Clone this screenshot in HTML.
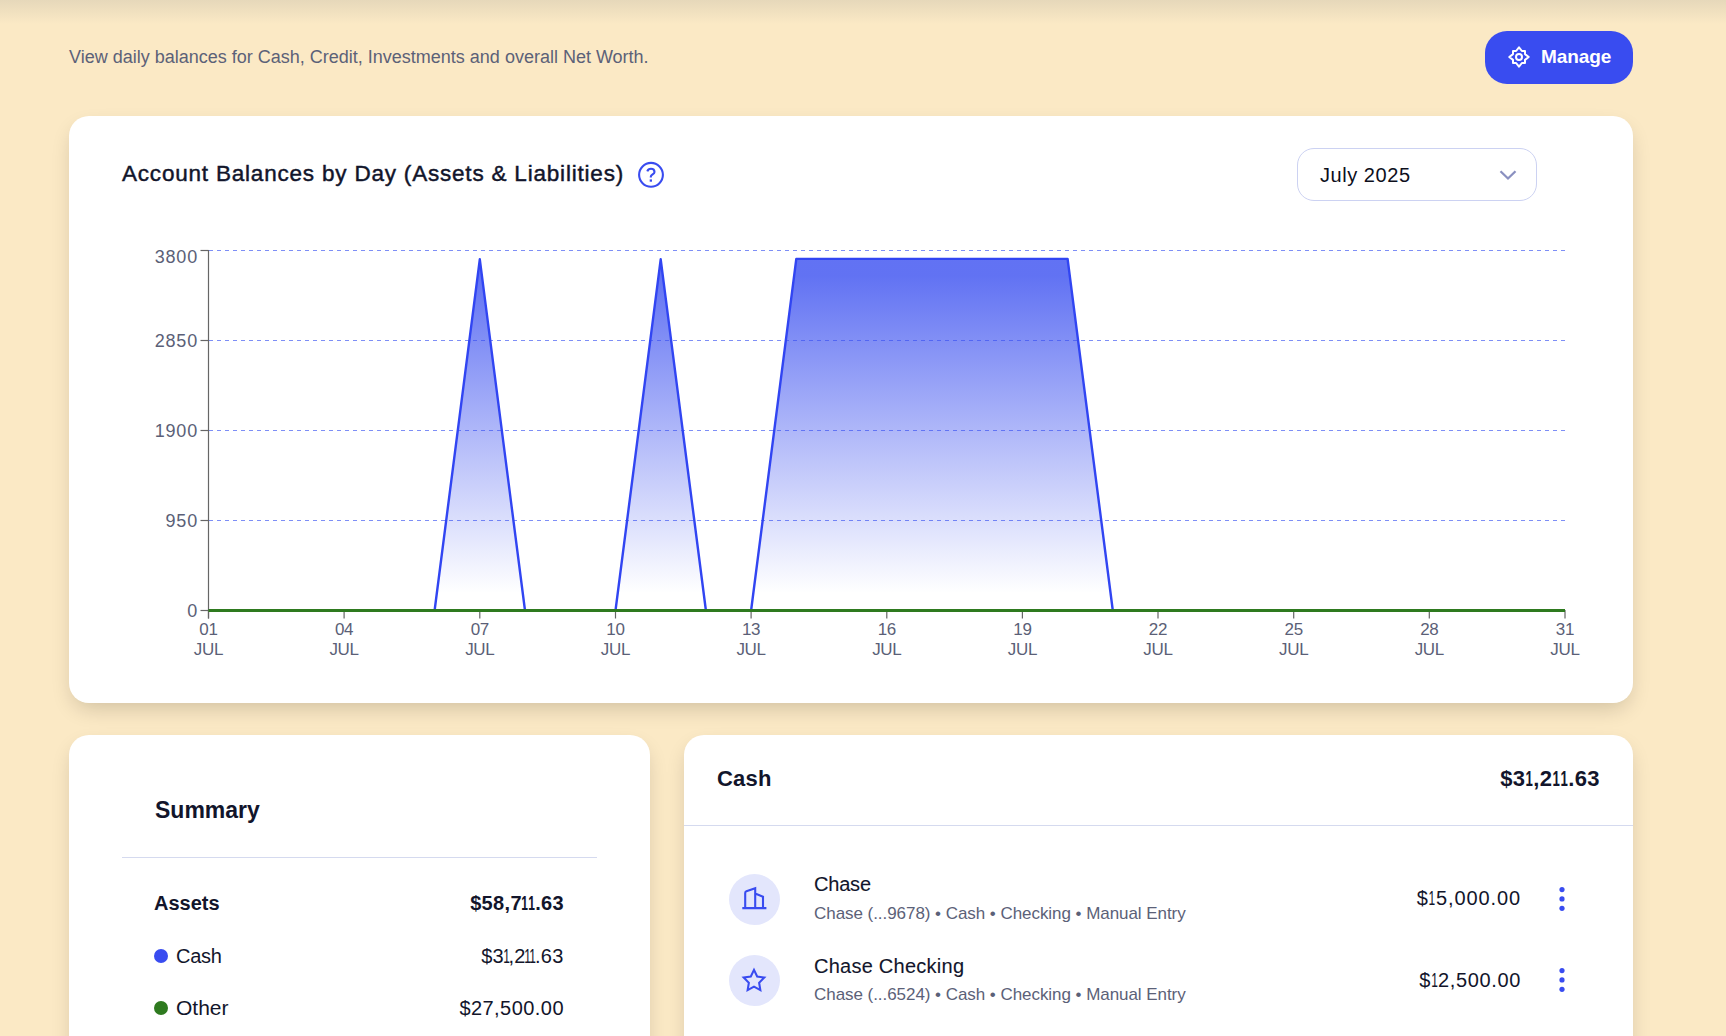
<!DOCTYPE html>
<html><head><meta charset="utf-8">
<style>
*{margin:0;padding:0;box-sizing:border-box}
html,body{width:1726px;height:1036px;overflow:hidden}
body{background:#fbe9c5;font-family:"Liberation Sans",sans-serif;position:relative;color:#12152b}
.a{position:absolute}
.t{position:absolute;white-space:nowrap;line-height:1}
.topshade{position:absolute;left:0;top:0;width:1726px;height:24px;background:linear-gradient(#e6d8ba,#fbe9c5)}
.btn{position:absolute;left:1485px;top:31px;width:148px;height:53px;border-radius:22px;background:#394cf0}
.card{position:absolute;background:#fff;border-radius:20px;box-shadow:0 9px 22px -5px rgba(20,15,0,0.2)}
.dd{position:absolute;left:1297px;top:148px;width:240px;height:53px;border:1px solid #ccd2f2;border-radius:17px;background:#fff}
.xl{position:absolute;font-size:17px;color:#5b5f77;text-align:center;width:60px;line-height:20px;letter-spacing:-0.3px}
.n1{margin:0 -2.4px 0 -2.4px}
.dot{position:absolute;width:14px;height:14px;border-radius:50%}
.ic{position:absolute;width:51px;height:51px;border-radius:50%;background:#e3e6fc}
</style></head><body>
<div class="topshade"></div>
<div class="t" style="left:69px;top:47.6px;font-size:18px;color:#5b6178;">View daily balances for Cash, Credit, Investments and overall Net Worth.</div>
<div class="btn"></div>
<svg class="a" style="left:1503px;top:41px" width="32" height="32" viewBox="-16 -16 32 32"><path d="M-6 -6H-2.9L0 -9.7L2.9 -6H6V-2.9L9.7 0L6 2.9V6H2.9L0 9.7L-2.9 6H-6V2.9L-9.7 0L-6 -2.9Z" fill="none" stroke="#fff" stroke-width="2" stroke-linejoin="round"/><circle cx="0" cy="0" r="3" fill="none" stroke="#fff" stroke-width="2"/></svg>
<div class="t" style="left:1541px;top:46.9px;font-size:19px;font-weight:bold;color:#fff;letter-spacing:-0.1px;">Manage</div>
<div class="card" style="left:69px;top:116px;width:1564px;height:587px"></div>
<div class="t" style="left:122px;top:163.0px;font-size:22.5px;color:#12152b;letter-spacing:0.8px;-webkit-text-stroke:0.45px #12152b;">Account Balances by Day (Assets &amp; Liabilities)</div>
<svg class="a" style="left:634px;top:158px" width="34" height="34" viewBox="0 0 34 34"><circle cx="17" cy="16.8" r="11.9" fill="none" stroke="#394cf0" stroke-width="2.1"/><path d="M13.3 13.3C13.9 11.5 15.3 10.7 17 10.7C19 10.7 20.5 12 20.5 13.9C20.5 16.3 16.8 16.5 16.8 18.8V19.4" fill="none" stroke="#394cf0" stroke-width="2.1"/><rect x="15.7" y="21.4" width="2.3" height="2.3" fill="#394cf0"/></svg>
<div class="dd"></div>
<div class="t" style="left:1320px;top:164.8px;font-size:20px;color:#0d0f1c;letter-spacing:0.55px;">July 2025</div>
<svg class="a" style="left:1496px;top:166px" width="24" height="18" viewBox="0 0 24 18"><path d="M4.5 5.2L12 12.5L19.5 5.2" fill="none" stroke="#8a90c0" stroke-width="2.3"/></svg>
<svg class="a" style="left:0;top:0" width="1726" height="703" viewBox="0 0 1726 703">
<defs><linearGradient id="g" gradientUnits="userSpaceOnUse" x1="0" y1="258" x2="0" y2="610.5"><stop offset="0.05" stop-color="#3a4ff0" stop-opacity="0.8"/><stop offset="0.95" stop-color="#3a4ff0" stop-opacity="0"/></linearGradient></defs>
<g stroke="#7d8ef6" stroke-width="1" stroke-dasharray="4 4">
<line x1="209" y1="250.5" x2="1565" y2="250.5"/><line x1="209" y1="340.5" x2="1565" y2="340.5"/><line x1="209" y1="430.5" x2="1565" y2="430.5"/><line x1="209" y1="520.5" x2="1565" y2="520.5"/>
</g>
<path d="M434.6 610.5L479.8 259.3L525.0 610.5Z M615.5 610.5L660.7 259.3L705.9 610.5Z M751.1 610.5L796.3 258.9L1067.6 258.9L1112.8 610.5Z" fill="url(#g)"/>
<path d="M434.6 610.5L479.8 259.3L525.0 610.5 M615.5 610.5L660.7 259.3L705.9 610.5 M751.1 610.5L796.3 258.9L1067.6 258.9L1112.8 610.5" fill="none" stroke="#3145f2" stroke-width="2.4" stroke-linejoin="round"/>
<g stroke="#666" stroke-width="1.2" fill="none">
<line x1="208.5" y1="250" x2="208.5" y2="618.5"/>
<line x1="200.5" y1="250.5" x2="208.5" y2="250.5"/><line x1="200.5" y1="340.5" x2="208.5" y2="340.5"/><line x1="200.5" y1="430.5" x2="208.5" y2="430.5"/><line x1="200.5" y1="520.5" x2="208.5" y2="520.5"/><line x1="200.5" y1="610.5" x2="208.5" y2="610.5"/>
<line x1="208.5" y1="610" x2="208.5" y2="618.5"/><line x1="344.1" y1="610" x2="344.1" y2="618.5"/><line x1="479.8" y1="610" x2="479.8" y2="618.5"/><line x1="615.5" y1="610" x2="615.5" y2="618.5"/><line x1="751.1" y1="610" x2="751.1" y2="618.5"/><line x1="886.8" y1="610" x2="886.8" y2="618.5"/><line x1="1022.4" y1="610" x2="1022.4" y2="618.5"/><line x1="1158.0" y1="610" x2="1158.0" y2="618.5"/><line x1="1293.7" y1="610" x2="1293.7" y2="618.5"/><line x1="1429.3" y1="610" x2="1429.3" y2="618.5"/><line x1="1565.0" y1="610" x2="1565.0" y2="618.5"/>
</g>
<line x1="208.5" y1="610.5" x2="1565" y2="610.5" stroke="#2e7a1f" stroke-width="3"/>
</svg>
<div class="t" style="right:1528px;top:248.0px;font-size:18px;color:#5b5f77;letter-spacing:0.8px;">3800</div>
<div class="t" style="right:1528px;top:331.7px;font-size:18px;color:#5b5f77;letter-spacing:0.8px;">2850</div>
<div class="t" style="right:1528px;top:421.7px;font-size:18px;color:#5b5f77;letter-spacing:0.8px;">1900</div>
<div class="t" style="right:1528px;top:511.7px;font-size:18px;color:#5b5f77;letter-spacing:0.8px;">950</div>
<div class="t" style="right:1528px;top:601.7px;font-size:18px;color:#5b5f77;letter-spacing:0.8px;">0</div>
<div class="xl" style="left:178.5px;top:619.9px">01<br>JUL</div>
<div class="xl" style="left:314.1px;top:619.9px">04<br>JUL</div>
<div class="xl" style="left:449.8px;top:619.9px">07<br>JUL</div>
<div class="xl" style="left:585.5px;top:619.9px">10<br>JUL</div>
<div class="xl" style="left:721.1px;top:619.9px">13<br>JUL</div>
<div class="xl" style="left:856.8px;top:619.9px">16<br>JUL</div>
<div class="xl" style="left:992.4px;top:619.9px">19<br>JUL</div>
<div class="xl" style="left:1128.0px;top:619.9px">22<br>JUL</div>
<div class="xl" style="left:1263.7px;top:619.9px">25<br>JUL</div>
<div class="xl" style="left:1399.3px;top:619.9px">28<br>JUL</div>
<div class="xl" style="left:1535.0px;top:619.9px">31<br>JUL</div>
<div class="card" style="left:69px;top:735px;width:581px;height:400px"></div>
<div class="t" style="left:155px;top:799.3px;font-size:23px;font-weight:bold;color:#12152b;">Summary</div>
<div class="a" style="left:122px;top:857px;width:475px;height:1px;background:#d5daef"></div>
<div class="t" style="left:154px;top:893.1px;font-size:20px;font-weight:bold;color:#12152b;">Assets</div>
<div class="t" style="right:1162px;top:893.1px;font-size:20px;font-weight:bold;color:#12152b;letter-spacing:0.33px;">$58,7<span style="display:inline-block;transform:scaleX(0.6);margin:0 -2.40px">1</span><span style="display:inline-block;transform:scaleX(0.6);margin:0 -2.40px">1</span>.63</div>
<div class="dot" style="left:154px;top:949px;background:#394cf0"></div>
<div class="t" style="left:176px;top:946.1px;font-size:20px;color:#12152b;letter-spacing:-0.3px;">Cash</div>
<div class="t" style="right:1162.5px;top:945.8px;font-size:20px;color:#12152b;letter-spacing:0.2px;">$3<span style="display:inline-block;transform:scaleX(0.6);margin:0 -3.30px">1</span>,2<span style="display:inline-block;transform:scaleX(0.6);margin:0 -3.30px">1</span><span style="display:inline-block;transform:scaleX(0.6);margin:0 -3.30px">1</span>.63</div>
<div class="dot" style="left:154px;top:1001px;background:#2e7a1f"></div>
<div class="t" style="left:176px;top:996.9px;font-size:21px;color:#12152b;">Other</div>
<div class="t" style="right:1162px;top:997.8px;font-size:20px;color:#12152b;letter-spacing:0.45px;">$27,500.00</div>
<div class="card" style="left:684px;top:735px;width:949px;height:400px"></div>
<div class="t" style="left:717px;top:768.3px;font-size:22px;font-weight:bold;color:#12152b;letter-spacing:0.2px;">Cash</div>
<div class="t" style="right:126px;top:768.2px;font-size:22px;font-weight:bold;color:#12152b;letter-spacing:0.4px;">$3<span style="display:inline-block;transform:scaleX(0.6);margin:0 -2.40px">1</span>,2<span style="display:inline-block;transform:scaleX(0.6);margin:0 -2.40px">1</span><span style="display:inline-block;transform:scaleX(0.6);margin:0 -2.40px">1</span>.63</div>
<div class="a" style="left:684px;top:825px;width:949px;height:1px;background:#d5daef"></div>
<div class="ic" style="left:729px;top:874px"></div>
<svg class="a" style="left:726px;top:870px" width="56" height="56" viewBox="0 0 56 56"><path d="M16.3 38.1H40.4 M19.2 38.1V23Q19.2 21.6 20.4 21.2L29.2 18.3V38.1 M29.2 23.6L37 26.7V38.1" fill="none" stroke="#394cf0" stroke-width="2.1"/></svg>
<div class="t" style="left:814px;top:874.1px;font-size:20px;color:#12152b;letter-spacing:-0.2px;-webkit-text-stroke:0.1px #12152b;">Chase</div>
<div class="t" style="left:814px;top:904.5px;font-size:17px;color:#5b6178;letter-spacing:-0.05px;">Chase (...9678) • Cash • Checking • Manual Entry</div>
<div class="t" style="right:205px;top:887.7px;font-size:20px;color:#12152b;letter-spacing:0.9px;">$<span style="display:inline-block;transform:scaleX(0.6);margin:0 -2.40px">1</span>5,000.00</div>
<svg class="a" style="left:1554px;top:880px" width="16" height="38" viewBox="0 0 16 38"><circle cx="8" cy="9.55" r="2.6" fill="#394cf0"/><circle cx="8" cy="18.9" r="2.6" fill="#394cf0"/><circle cx="8" cy="28.3" r="2.6" fill="#394cf0"/></svg>
<div class="ic" style="left:729px;top:955px"></div>
<svg class="a" style="left:742px;top:967px" width="24" height="24" viewBox="0 0 24 24" overflow="visible"><path d="M12 17.75l-6.172 3.245l1.179 -6.873l-5 -4.867l6.9 -1l3.086 -6.253l3.086 6.253l6.9 1l-5 4.867l1.179 6.873z" fill="none" stroke="#394cf0" stroke-width="2" stroke-linejoin="miter" transform="translate(12 13.5) scale(1.03 1.07) translate(-12 -12)"/></svg>
<div class="t" style="left:814px;top:956.1px;font-size:20px;color:#12152b;letter-spacing:0.25px;-webkit-text-stroke:0.1px #12152b;">Chase Checking</div>
<div class="t" style="left:814px;top:985.5px;font-size:17px;color:#5b6178;letter-spacing:-0.05px;">Chase (...6524) • Cash • Checking • Manual Entry</div>
<div class="t" style="right:205px;top:969.7px;font-size:20px;color:#12152b;letter-spacing:0.65px;">$<span style="display:inline-block;transform:scaleX(0.6);margin:0 -2.40px">1</span>2,500.00</div>
<svg class="a" style="left:1554px;top:961px" width="16" height="38" viewBox="0 0 16 38"><circle cx="8" cy="9.55" r="2.6" fill="#394cf0"/><circle cx="8" cy="18.9" r="2.6" fill="#394cf0"/><circle cx="8" cy="28.3" r="2.6" fill="#394cf0"/></svg>
</body></html>
